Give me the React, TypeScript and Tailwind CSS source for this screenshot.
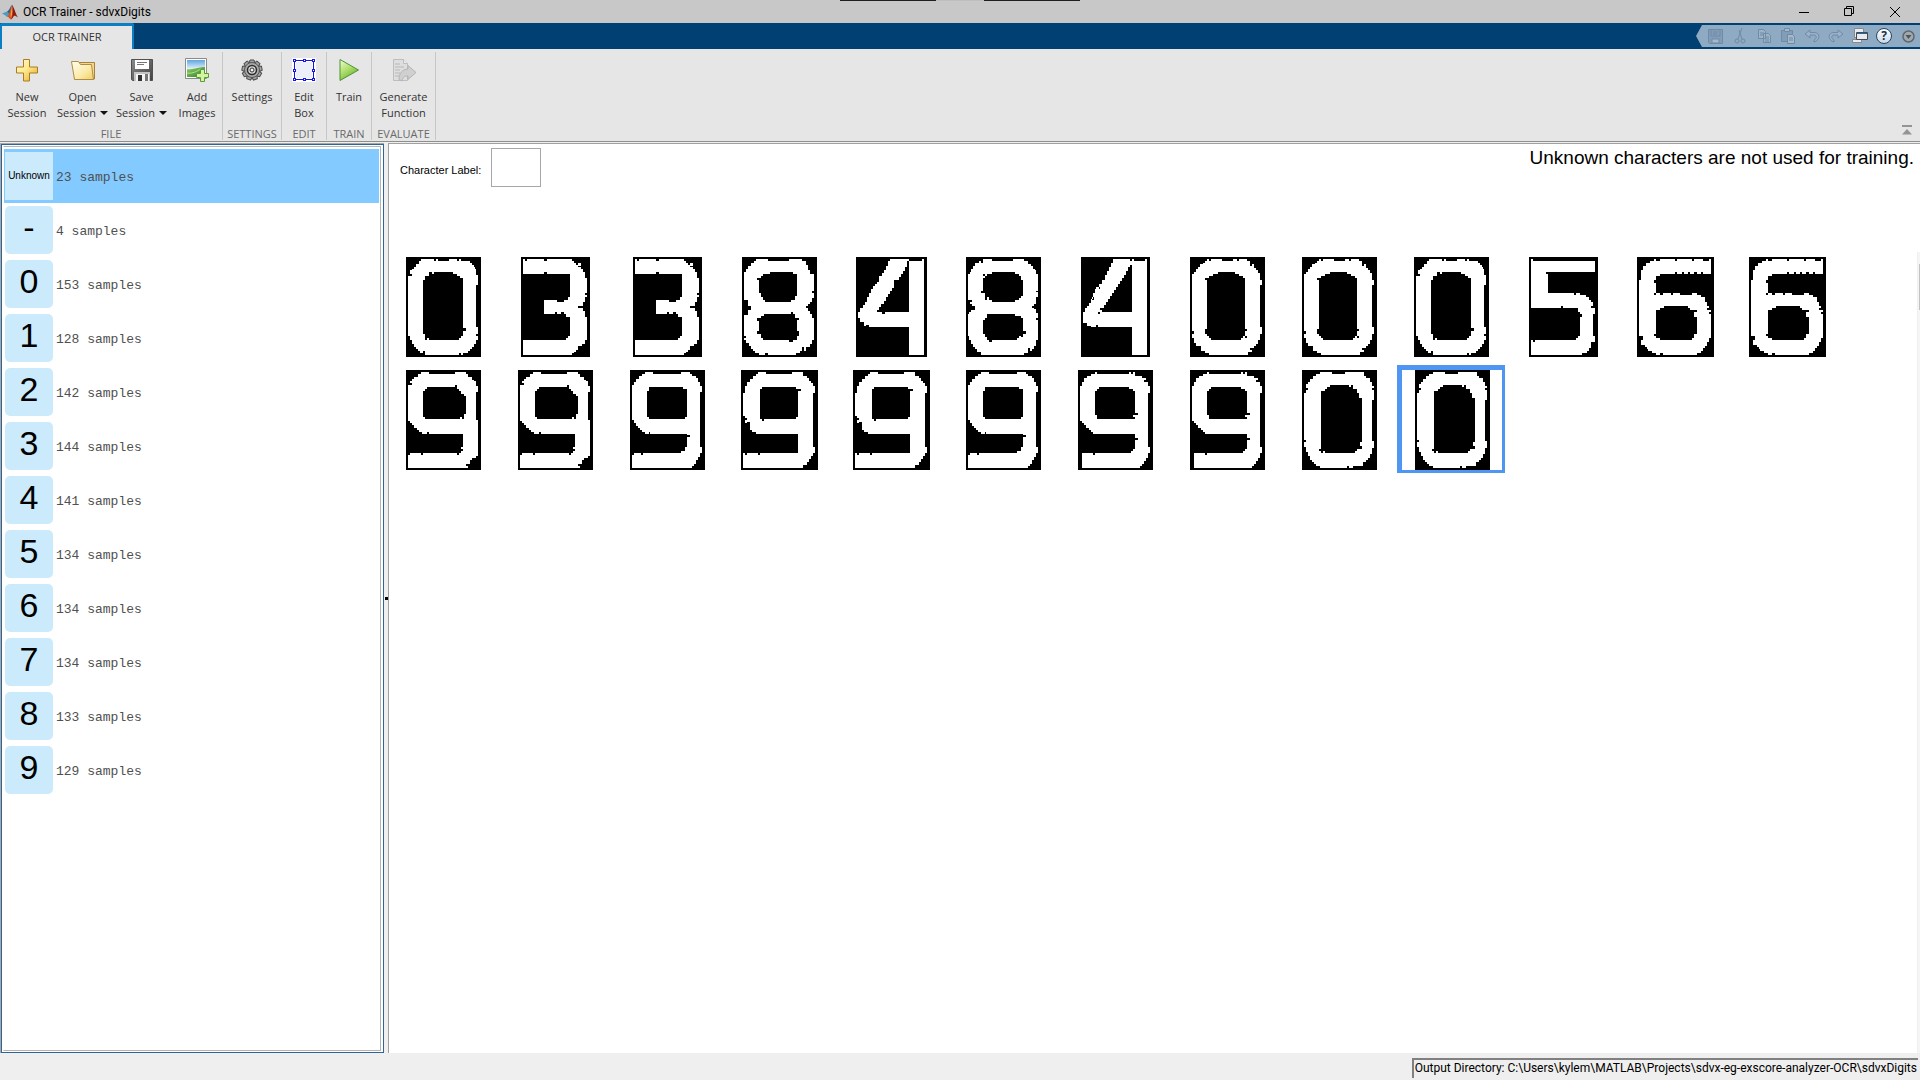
import React from "react";

const ZERO_A =
  "M63 6H84V12H90V6H96V12H129V6H153V12H159V6H165V12H192V18H198V24H204V30H207V36H210V54H216V84H210V210H216V231H210V237H216V249H210V261H204V270H198V276H192V282H186V288H171V294H165V288H159V294H57V282H51V288H42V282H36V276H30V270H24V261H18V249H12V237H6V57H18V51H12V39H18V36H24V30H30V21H39V12H45V6Z" +
  "M84 45H141V51H153V57H162V63H171V213H180V222H171V237H165V243H159V249H69V243H63V249H57V231H51V69H57V57H69V45H78V51H84Z";
const ZERO_B =
  "M63 6H96V12H129V6H141V12H147V6H171V12H180V27H186V21H192V33H198V39H204V48H210V69H216V84H210V210H216V231H210V249H204V261H198V267H192V273H180V279H186V285H174V294H57V288H45V282H33V267H18V258H12V243H6V231H12V222H6V51H12V45H18V36H24V30H30V21H39V18H45V12H51V6H57V12H63Z" +
  "M84 45H135V51H147V57H159V63H165V216H171V222H165V237H171V243H165V237H159V243H153V249H63V243H57V237H51V231H45V216H51V69H45V63H57V57H69V51H84Z";
const ZERO_D =
  "M54 6H90V12H129V6H186V18H192V24H204V36H210V48H216V54H210V60H216V90H210V213H216V234H210V252H204V264H198V270H192V276H183V288H153V294H141V288H135V294H54V288H42V282H36V276H30V270H24V258H18V246H12V231H6V216H12V210H6V69H12V60H18V54H12V42H18V36H24V27H33V18H42V12H54Z" +
  "M84 45H141V51H147V45H153V57H165V69H171V84H180V216H174V228H180V237H165V243H159V249H69V243H63V249H57V243H51V237H57V63H69V57H75V51H84Z";
const THREE =
  "M6 6H12V12H18V6H69V12H78V6H153V12H159V18H165V24H171V30H180V36H186V45H192V63H198V108H192V114H198V120H192V135H186V147H171V153H186V162H192V180H198V249H192V261H183V267H171V279H165V285H159V288H153V294H6V249H135V243H141V237H147V180H135V171H129V165H120V171H108V165H102V171H69V129H108V135H129V129H141V120H147V51H78V45H69V51H6Z" +
  "M171 18H180V26H171Z";
const EIGHT_A =
  "M42 6H78V12H141V6H180V12H192V24H198V39H204V51H216V102H210V108H216V123H210V135H204V141H198V147H192V153H198V162H204V171H210V183H216V249H210V261H204V270H192V282H186V270H180V282H174V288H162V294H78V288H69V294H51V288H39V282H33V276H27V267H21V258H12V249H6V243H12V237H6V174H18V159H27V147H18V129H6V45H12V36H18V27H27V18H36V12H42Z" +
  "M84 45H153V51H165V117H159V129H147V135H69V129H63V120H57V108H51V69H45V63H57V57H63V51H84Z" +
  "M66 171H147V165H153V171H159V183H171V189H165V222H171V237H165V249H153V255H141V249H63V243H57V231H45V222H51V192H45V183H57V177H66Z";
const EIGHT_B =
  "M51 6V18H45V12H39V18H27V27H21V36H15V45H12V51H6V129H18V135H12V141H18V147H27V159H15V165H9V171H6V237H9V249H15V261H21V270H27V276H33V285H45V294H174V288H186V273H192V282H198V276H204V267H210V249H216V189H210V183H216V168H210V156H204V153H198V147H204V141H210V120H216V105H210V102H216V51H210V39H207V36H201V27H195V21H186V12H174V6H141V12H78V6Z" +
  "M78 45H147V51H159V57H165V69H171V117H165V123H159V129H147V135H78V129H69V120H63V129H57V108H45V102H51V63H57V57H51V51H57V57H63V51H78Z" +
  "M63 171H147V177H165V183H171V222H180V231H171V240H165V237H159V243H153V249H78V255H69V249H63V240H57V231H51V189H57V183H63Z";
const FOUR_A =
  "M102 6V12H96V27H90V39H84V48H78V57H69V75H63V81H57V87H51V96H45V108H39V120H33V135H27V144H21V153H12V165H6V183H12V195H24V207H30V204H39V210H159V294H204V6H198V12H159V6Z" +
  "M153 12H159V165H87V171H78V165H63V159H69V150H75V141H84V132H90V120H96V111H102V102H108V93H114V69H129V60H135V51H141V42H147V30H153Z";
const FOUR_B =
  "M96 6V18H90V30H84V42H78V54H72V69H63V81H54V96H42V108H36V126H30V138H24V147H18V153H12V165H6V198H18V207H30V210H45V204H51V210H153V294H198V6H192V12H159V6H153V12H147V6Z" +
  "M147 24H153V165H63V159H57V153H69V144H75V135H81V126H87V117H93V108H99V99H105V90H111V81H117V72H123V63H129V54H135V42H141V30H147ZM45 90H57V96H45ZM51 165H57V171H51ZM33 120H39V129H33Z";
const FIVE =
  "M6 6H12V12H198V45H51V51H57V108H135V114H141V108H153V114H171V120H180V129H186V135H192V147H186V153H198V171H192V237H198V255H186V273H180V282H174V288H159V294H6V249H12V255H18V249H141V243H147V237H153V180H159V171H153V165H147V153H102V147H96V153H6Z";
const SIX =
  "M57 6V12H69V6H114V12H120V6H165V12H171V6H198V12H216V6H222V51H198V45H192V51H180V45H171V51H159V45H153V51H141V45H135V51H120V45H114V51H69V57H57V69H51V78H57V108H51V114H57V108H69V114H78V108H102V114H108V108H129V114H165V108H180V114H192V120H204V135H210V147H216V153H210V159H222V165H216V171H222V243H216V255H210V267H204V273H198V282H192V288H180V294H78V288H69V294H57V288H45V282H33V276H30V270H24V264H12V249H18V237H6V69H12V39H18V27H27V18H39V12H51V6Z" +
  "M81 147H153V153H159V159H180V165H171V180H180V231H171V243H165V249H69V243H57V237H51V231H57V159H69V153H81Z";
const NINE_A =
  "M45 6H69V12H147V6H180V12H186V21H198V30H204V33H210V48H216V66H210V150H216V258H210V264H198V270H192V282H186V288H180V282H186V294H6V255H12V249H45V255H51V249H153V255H159V249H165V243H171V237H165V231H171V192H69V186H63V192H48V186H39V180H33V174H24V165H18V159H12V153H6V45H18V39H12V33H18V27H24V21H36V12H45Z" +
  "M63 51H147V45H153V57H159V63H165V72H174V78H180V132H174V147H168V141H162V147H57V141H51V63H57V57H63Z";
const NINE_B =
  "M45 6H69V12H153V6H180V12H186V18H198V24H204V36H210V48H216V66H210V231H216V249H210V261H204V270H198V282H192V288H186V294H6V255H12V249H33V255H39V249H153V243H165V231H171V201H180V195H171V192H60V186H57V192H45V186H36V180H30V174H24V168H18V159H12V150H6V45H12V36H18V27H27V18H36V12H45Z" +
  "M57 51H159V57H171V141H165V147H57V141H51V63H57Z";
const NINE_C =
  "M51 6H75V12H153V6H186V18H198V24H204V33H210V39H216V48H222V69H216V231H222V249H216V258H210V267H204V276H198V285H186V294H6V249H12V255H18V249H51V255H57V249H171V192H45V186H33V180H27V156H18V159H12V150H18V144H12V138H6V69H12V48H18V36H27V27H36V18H45V12H51Z" +
  "M63 51H165V57H171V63H180V57H171V141H165V147H69V153H63V147H57V57H63Z";
const NINE_D =
  "M39 12V18H27V24H18V36H12V48H6V153H12V159H18V165H24V174H33V180H39V186H45V192H171V204H180V210H171V237H165V243H159V249H51V255H45V249H12V294H186V288H192V282H198V273H204V264H210V249H216V231H210V69H216V48H210V36H198V30H204V24H192V18H171V6H165V12H159V6H153V12H57V6H51V12Z" +
  "M63 51H153V57H165V63H171V129H180V135H165V141H171V147H57V135H51V63H57V57H63Z";

type Sample = { digit: string; w: number; d: string };
const s = (digit: string, w: number, d: string): Sample => ({ digit, w, d });

const samples: Sample[] = [
  s("0", 75, ZERO_A), s("3", 69, THREE), s("3", 69, THREE), s("8", 75, EIGHT_A), s("4", 71, FOUR_A),
  s("8", 75, EIGHT_B), s("4", 69, FOUR_B), s("0", 75, ZERO_B), s("0", 75, ZERO_B), s("0", 75, ZERO_A),
  s("5", 69, FIVE), s("6", 77, SIX), s("6", 77, SIX),
  s("9", 75, NINE_A), s("9", 75, NINE_A), s("9", 75, NINE_B), s("9", 77, NINE_C), s("9", 77, NINE_C),
  s("9", 75, NINE_B), s("9", 75, NINE_D), s("9", 75, NINE_D), s("0", 75, ZERO_D), s("0", 75, ZERO_D),
];

const classes = [
  ["Unknown", "23"], ["-", "4"], ["0", "153"], ["1", "128"], ["2", "142"], ["3", "144"],
  ["4", "141"], ["5", "134"], ["6", "134"], ["7", "134"], ["8", "133"], ["9", "129"],
];

function SampleTile({ sample, selected }: { sample: Sample; selected: boolean }) {
  return (
    <button
      aria-label={`Sample ${sample.digit}`}
      className={
        selected
          ? "flex h-[108px] w-[108px] justify-center border-t-[5px] border-r-[3px] border-b-[3px] border-l-[5px] border-[#4f95f2]"
          : "flex h-[108px] w-[108px] justify-center pt-[5px]"
      }
    >
      <svg width={sample.w} height="100" viewBox={`0 0 ${sample.w * 3} 300`} shapeRendering="crispEdges" className="shrink-0">
        <rect width={sample.w * 3} height="300" fill="#000" />
        <path d={sample.d} fill="#fff" fillRule="evenodd" />
      </svg>
    </button>
  );
}

function MatlabLogo() {
  return (
    <svg width="16" height="16" viewBox="0 0 16 16">
      <path d="M0 9.500 5 7.500 7.500 10.500 5 13 3.500 11.500Z" fill="#4b9bc4" />
      <path d="M5 7.500C7.500 6.500 8 3 10 .8L9 7 7.500 10.500Z" fill="#355f8c" />
      <path d="M10 .8C8.500 4 8.500 9 5 13c2-.5 2.500 2 4 2.600C11 14 11 12 12 11Z" fill="#d2542a" />
      <path d="M10 .8C12 3 13.500 10 16 13.500 14 12 12.500 11.500 12 12c-1 .5-1.500 3-3 3.600C11.500 12 10.500 5 10 .8Z" fill="#8c1c10" />
      <path d="M10 2c.3 4 .8 7-1 11.500C8 11 9.500 6 10 2Z" fill="#f8a83c" />
    </svg>
  );
}

function PlusIcon() {
  return (
    <svg width="24" height="24" viewBox="0 0 24 24">
      <defs><linearGradient id="gold" x1="0" y1="0" x2="1" y2="1"><stop offset="0" stopColor="#fffce0" /><stop offset=".45" stopColor="#ffe98c" /><stop offset="1" stopColor="#e3a92c" /></linearGradient></defs>
      <path d="M8.500 1.500h6v7.500h8v6h-8v8h-6v-8h-7v-6h7z" fill="url(#gold)" stroke="#ab7c1e" />
    </svg>
  );
}

function FolderIcon() {
  return (
    <svg width="26" height="24" viewBox="0 0 26 24">
      <defs><linearGradient id="fold" x1="0" y1="0" x2="1" y2="1"><stop offset="0" stopColor="#fffef0" /><stop offset=".6" stopColor="#fbeaa8" /><stop offset="1" stopColor="#f0cf62" /></linearGradient></defs>
      <path d="M4.500 21V4.500h20V21z" fill="#f4d98a" stroke="#a8823c" />
      <path d="M4.500 21.500 1.500 3.500h7l2 3h11l2 15z" fill="url(#fold)" stroke="#b08b45" />
    </svg>
  );
}

function FloppyIcon() {
  return (
    <svg width="24" height="24" viewBox="0 0 24 24">
      <defs><linearGradient id="flop" x1="0" y1="0" x2="1" y2="1"><stop offset="0" stopColor="#8c8c8c" /><stop offset="1" stopColor="#404040" /></linearGradient></defs>
      <path d="M1.500 1.500h21v21h-20l-1-1z" fill="url(#flop)" stroke="#505050" />
      <path d="M5 2h14v9H5z" fill="#fff" /><path d="M7 4.500h10M7 6.500h7" stroke="#777" />
      <path d="M4 14h16v9H4z" fill="#c4c4c4" /><path d="M6 16h13v7H6z" fill="#f5f5f5" /><path d="M8 17h4v6H8z" fill="#333" /><path d="M15 16h3v7h-3z" fill="#777" />
    </svg>
  );
}

function ImageIcon() {
  return (
    <svg width="26" height="26" viewBox="0 0 26 26">
      <defs>
        <linearGradient id="sky" x1="0" y1="0" x2="0" y2="1"><stop offset="0" stopColor="#5ea6e0" /><stop offset="1" stopColor="#e4f2fc" /></linearGradient>
        <linearGradient id="grass" x1="0" y1="0" x2="1" y2="1"><stop offset="0" stopColor="#8fcf60" /><stop offset="1" stopColor="#2f8030" /></linearGradient>
      </defs>
      <path d="M1.500 1.500h21v20h-21z" fill="#fff" stroke="#8a8a8a" />
      <path d="M3 3h18v9H3z" fill="url(#sky)" />
      <path d="M3 12c7 1 12-2 18-2v10H3z" fill="url(#grass)" /><path d="M3 16c6 1 10-2 14-4" stroke="#b9e08c" fill="none" />
      <path d="M16.500 12.500h4v4h4v4h-4v4h-4v-4h-4v-4h4z" fill="#d2f5a4" stroke="#5a9c34" />
    </svg>
  );
}

function GearIcon() {
  return (
    <svg width="22" height="22" viewBox="-11 -11 22 22">
      {[0, 40, 80, 120, 160, 200, 240, 280, 320].map((a) => (
        <path key={a} d="M-2-10H2L3-6H-3Z" transform={`rotate(${a})`} fill="#a4a4a4" stroke="#4c4c4c" />
      ))}
      <circle r="7.500" fill="#a8a8a8" stroke="#555" />
      <circle r="4.500" fill="#d8d8d8" stroke="#2c2c2c" strokeWidth="1.500" />
      <circle r="2" fill="#f4f4f4" stroke="#333" />
    </svg>
  );
}

function EditBoxIcon() {
  const handles = [[1, 1], [11, 1], [20, 1], [1, 11], [20, 11], [1, 20], [11, 20], [20, 20]];
  return (
    <svg width="24" height="24" viewBox="0 0 24 24" shapeRendering="crispEdges">
      <path d="M0 0h24v24H0z" fill="#fff" /><path d="M4 4h16v16H4z" fill="#eceef8" />
      <path d="M2.500 2.500h19v19h-19z" fill="none" stroke="#1414e6" />
      {handles.map(([x, y]) => <rect key={`${x}-${y}`} x={x + 0.5} y={y + 0.5} width="2" height="2" fill="#fff" stroke="#1414e6" />)}
    </svg>
  );
}

function PlayIcon() {
  return (
    <svg width="22" height="24" viewBox="0 0 22 24">
      <defs><linearGradient id="play" x1="0" y1="0" x2=".6" y2="1"><stop offset="0" stopColor="#f2fcd8" /><stop offset=".5" stopColor="#b2e070" /><stop offset="1" stopColor="#66b030" /></linearGradient></defs>
      <path d="M2 1.500 20.500 12 2 22.500z" fill="url(#play)" stroke="#4d9430" strokeLinejoin="round" />
    </svg>
  );
}

function GenerateIcon() {
  return (
    <svg width="26" height="24" viewBox="0 0 26 24">
      <path d="M2.500 1.500h10l4 4v17h-14z" fill="#dedede" stroke="#bdbdbd" />
      <path d="M12.500 1.500v4h4" fill="#eee" stroke="#bdbdbd" />
      <path d="M4 6h5M4 9h9M4 12h5M4 15h5M4 18h4" stroke="#b8b8b8" />
      <path d="M8 21.500c0-6 3-10 9-10.500v-3.500l8 7-8 7V18c-4 0-5 1-6 5z" fill="#d0d0d0" stroke="#b4b4b4" />
    </svg>
  );
}

type ToolProps = { icon: React.ReactNode; lines: string[]; menu?: boolean; width: string };
function Tool({ icon, lines, menu, width }: ToolProps) {
  return (
    <button className={`flex flex-col items-center ${width}`}>
      <span className="flex h-[34px] items-center justify-center pb-1">{icon}</span>
      {lines.map((line, i) => (
        <span key={line} className="flex items-center gap-1 leading-4 whitespace-nowrap">
          {line}
          {menu && i === 1 && <svg width="8" height="4" viewBox="0 0 8 4"><path d="M0 0h8L4 4z" fill="#111" /></svg>}
        </span>
      ))}
    </button>
  );
}

function Group({ name, children }: { name: string; children: React.ReactNode }) {
  return (
    <section className="flex flex-col justify-between border-r border-[#c6c6c6] pt-[3px]">
      <div className="flex">{children}</div>
      <h2 className="text-center leading-3 text-[#6a6a6a]">{name}</h2>
    </section>
  );
}

function QuickAccess() {
  const dim = "#6f8ba8";
  return (
    <div className="flex items-center">
      <svg width="6" height="22" viewBox="0 0 6 22"><path d="M6 0 0 11 6 22z" fill="#8faac3" /></svg>
      <div className="flex h-[22px] items-center gap-2 bg-[#8faac3] pr-[5px] pl-[5px]">
        <button aria-label="Save"><svg width="17" height="17" viewBox="0 0 17 17" fill="none" stroke={dim}><path d="M1.500 1.500h14v14h-13l-1-1z" fill="#829db8" /><path d="M4 2v6h9V2M6 4h5M6 6h4" /><path d="M5 11h7v4H5z" fill="#a4b9cc" /></svg></button>
        <button aria-label="Cut"><svg width="16" height="16" viewBox="0 0 16 16" fill="none" stroke={dim}><path d="M10 0 6 11M7 2l3 9" /><circle cx="5" cy="13" r="2" /><circle cx="11" cy="13" r="2" /></svg></button>
        <button aria-label="Copy"><svg width="16" height="16" viewBox="0 0 16 16" fill="#9db3c8" stroke={dim}><path d="M2.500 1.500h5l2 2v7h-7zM7.500 5.500h5l2 2v7h-7z" /><path d="M4 5h4M4 7h3M9 9h4M9 11h4M9 13h4" /></svg></button>
        <button aria-label="Paste"><svg width="16" height="16" viewBox="0 0 16 16" fill="#829db8" stroke={dim}><path d="M1.500 2.500h11v11h-11z" /><path d="M4.500.500h5v3h-5z" fill="#a4b9cc" /><path d="M7.500 6.500h5l2 2v7h-7z" fill="#a4b9cc" /><path d="M9 10h4M9 12h4" /></svg></button>
        <button aria-label="Undo"><svg width="16" height="16" viewBox="0 0 16 16" fill="#9bb2c8" stroke={dim}><path d="M1 6 6 2v2.500h4c7 0 6 8 0 9.500v-2c3-1 3-5 0-5H6V10z" /></svg></button>
        <button aria-label="Redo"><svg width="16" height="16" viewBox="0 0 16 16" fill="#9bb2c8" stroke={dim}><path d="M15 6 10 2v2.500H6c-7 0-6 8 0 9.500v-2c-3-1-3-5 0-5h4V10z" /></svg></button>
        <button aria-label="Switch windows"><svg width="16" height="16" viewBox="0 0 16 16" fill="#e8ecf2" stroke="#4a4a4a"><path d="M2.500.500h9v9h-9zM.500 11.500h9v3h-9z" stroke="#8a8a8a" /><path d="M4.500 4.500h11v7h-11z" /><path d="M5 5.500h10" stroke="#1d6aa8" /></svg></button>
        <button aria-label="Help" className="mr-[2px] flex h-4 w-4 items-center justify-center rounded-full border border-[#2a4766] bg-linear-to-b from-white to-[#c8d9e8] text-[12px] font-bold text-[#1c2f44]">?</button>
        <button aria-label="Toolbar options"><svg width="13" height="13" viewBox="0 0 13 13"><circle cx="6.500" cy="6.500" r="5.500" fill="#a0a8b0" stroke="#62676c" strokeWidth="1.500" /><path d="M3.500 5h6l-3 4z" fill="#50555a" /></svg></button>
      </div>
    </div>
  );
}

export default function App() {
  return (
    <div className="relative flex h-screen flex-col overflow-hidden bg-[#efefef] font-['Open_Sans','Noto_Sans',sans-serif] text-[11px] text-[#333]">
      <div className="absolute inset-x-0 top-0 flex justify-center">
        <div className="h-px w-24 bg-[#221e20]" /><div className="h-px w-12 bg-[#bebebe]" /><div className="h-px w-24 bg-[#221e20]" />
      </div>
      <header className="flex h-[23px] shrink-0 items-center bg-[#c8c8c8] pr-[20px] pl-[2px] text-black">
        <MatlabLogo />
        <h1 className="ml-[5px] flex-1 font-['Roboto','Open_Sans',sans-serif] text-[12px]">OCR Trainer - sdvxDigits</h1>
        <div className="flex items-center gap-[35px]">
          <button aria-label="Minimize"><svg width="10" height="10"><path d="M0 5.500h10" stroke="#000" /></svg></button>
          <button aria-label="Restore"><svg width="11" height="11" fill="none" stroke="#000"><path d="M.500 2.500h7v7h-7zM2.500 2.500v-2h7v7h-2" /></svg></button>
          <button aria-label="Close"><svg width="10" height="10" stroke="#000"><path d="M0 0 10 10M10 0 0 10" /></svg></button>
        </div>
      </header>

      <nav className="flex h-[26px] shrink-0 items-center justify-between bg-[#004073]">
        <button className="h-full w-[134px] rounded-t-xs border-x-2 border-t-[3px] border-[#0a7fc3] bg-[#e6e6e6]">OCR TRAINER</button>
        <QuickAccess />
      </nav>

      <div className="flex h-[93px] shrink-0 border-b border-[#8c8f8c] bg-[#e6e6e6] pt-[3px] pb-px">
        <Group name="FILE">
          <Tool icon={<PlusIcon />} lines={["New", "Session"]} width="w-[54px]" />
          <Tool icon={<FolderIcon />} lines={["Open", "Session"]} menu width="w-[57px]" />
          <Tool icon={<FloppyIcon />} lines={["Save", "Session"]} menu width="w-[61px]" />
          <Tool icon={<ImageIcon />} lines={["Add", "Images"]} width="w-[50px]" />
        </Group>
        <Group name="SETTINGS"><Tool icon={<GearIcon />} lines={["Settings"]} width="w-[58px]" /></Group>
        <Group name="EDIT"><Tool icon={<EditBoxIcon />} lines={["Edit", "Box"]} width="w-[44px]" /></Group>
        <Group name="TRAIN"><Tool icon={<PlayIcon />} lines={["Train"]} width="w-[44px]" /></Group>
        <Group name="EVALUATE"><Tool icon={<GenerateIcon />} lines={["Generate", "Function"]} width="w-[63px]" /></Group>
        <button aria-label="Collapse toolstrip" className="mt-auto mr-[7px] mb-1 ml-auto">
          <svg width="12" height="11" fill="#949494"><path d="M1 0h10v2H1zM6 4l5 5.500H1z" /></svg>
        </button>
      </div>

      <main className="flex min-h-0 flex-1 pt-px">
        <aside className="w-[384px] shrink-0 border-t border-l border-[#a8a8a8]">
          <div className="h-full border border-[#2f6496] bg-white py-px pr-[2px] pl-px">
            <div className="flex h-full flex-col border border-[#b4b4b4] border-l-white pt-px">
              <ul className="mr-px pt-px">
                {classes.map(([label, count], i) => (
                  <li key={label}>
                    <button className={`flex h-[54px] w-full items-center gap-[3px] pl-px text-left ${i === 0 ? "bg-[#82caff]" : ""}`}>
                      <span className={`flex h-12 w-12 items-center justify-center bg-[#cbebfc] font-['Liberation_Sans',Arial,sans-serif] text-black ${i === 0 ? "pb-[2px] text-[10px]" : "rounded-[5px] pb-[6px] text-[34px]"}`}>
                        {label}
                      </span>
                      <span className="pt-1 font-['Liberation_Mono',monospace] text-[13px] leading-4 text-[#505050]">{count} samples</span>
                    </button>
                  </li>
                ))}
              </ul>
            </div>
          </div>
        </aside>

        <div className="flex w-1 shrink-0 items-center justify-center"><span className="h-[3px] w-[3px] bg-black" /></div>

        <section className="flex min-w-0 flex-1 flex-col border-t border-l border-[#a0a0a0] bg-white pt-1 font-['Liberation_Sans',Arial,sans-serif] text-black">
          <div className="flex pr-[6px] pl-[11px]">
            <label htmlFor="char-label" className="mt-[14px] mr-[10px] text-[11px] leading-4 whitespace-nowrap">Character Label:</label>
            <input id="char-label" className="h-[39px] w-[50px] border border-[#a6a6ac] bg-white text-center outline-none" />
            <p className="ml-auto text-[19px] leading-5">Unknown characters are not used for training.</p>
          </div>
          <div className="mt-[65px] flex min-h-0 flex-1">
            <div className="flex flex-1 flex-wrap content-start gap-x-1 gap-y-[5px] pr-[70px]">
              {samples.map((sample, i) => <SampleTile key={i} sample={sample} selected={i === samples.length - 1} />)}
            </div>
            <div className="w-[3px] border-l border-[#f0f0f0] bg-[#f5f5f5]"><div className="mt-[12px] ml-px h-[46px] bg-[#c1c1c1]" /></div>
          </div>
        </section>
      </main>

      <footer className="flex h-[27px] shrink-0 items-center justify-end pt-[3px] pr-[2px]">
        <output className="h-[20px] border-t-2 border-l-2 border-[#808080] px-px font-['Roboto','Open_Sans',sans-serif] text-[12px] leading-[17px] text-black">
          Output Directory: C:\Users\kylem\MATLAB\Projects\sdvx-eg-exscore-analyzer-OCR\sdvxDigits
        </output>
      </footer>
    </div>
  );
}
